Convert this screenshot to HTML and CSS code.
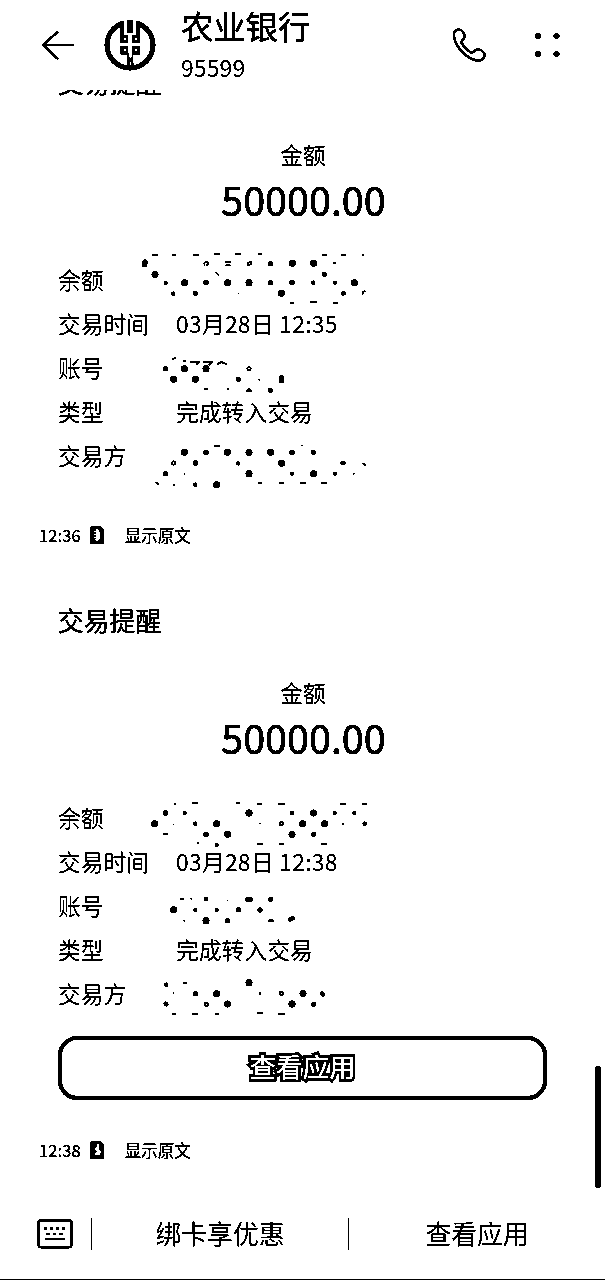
FILE: index.html
```html
<!DOCTYPE html>
<html lang="zh-CN">
<head>
<meta charset="utf-8">
<title>农业银行</title>
<link rel="stylesheet" href="styles.css">
</head>
<body>
<svg class="defs" width="0" height="0" aria-hidden="true">
  <filter id="mono" x="0" y="0" width="100%" height="100%" color-interpolation-filters="sRGB">
    <feColorMatrix type="saturate" values="0"/>
    <feComponentTransfer>
      <feFuncR type="discrete" tableValues="0 0 0 1 1"/>
      <feFuncG type="discrete" tableValues="0 0 0 1 1"/>
      <feFuncB type="discrete" tableValues="0 0 0 1 1"/>
    </feComponentTransfer>
  </filter>
  <symbol id="sim" viewBox="0 0 14 18">
    <path d="M2 0h8l4 3.500v14.500H0V2z"/>
  </symbol>
</svg>
<div class="screen">
  <header class="header">
    <svg class="back" viewBox="0 0 34 30"><path d="M33 15H2M17 1.500L2 15l15 14"/></svg>
    <svg class="logo" viewBox="0 0 52 52">
      <circle class="ring" cx="26" cy="26" r="23"/>
      <path class="gap" d="M16 0h20v8H16z"/>
      <path d="M16.500 2h3.500v14h4v8h-7.500zM36 2h-3.500v14h-4v8H36zM23.500 1h5v13h-5zM16.500 27H24v8.500h-7.500zM28.500 27H36v8.500h-7.500zM22.500 34h2.500v3l1.500 2 1.500-2v-3h2l-1.500 5 1.500 8h-2l-1.500-5-1.500 5h-2.500l1-7z"/>
      <path class="gap" d="M19.500 18.500h2.500v3h-2.500zM30.500 18.500h2.500v3h-2.500zM19.500 29.500h2.500v3h-2.500zM30.500 29.500h2.500v3h-2.500z"/>
    </svg>
    <div class="contact">
      <div class="name">农业银行</div>
      <div class="number">95599</div>
    </div>
    <svg class="phone" viewBox="0 0 34 35"><path d="M7 1.500C3 1 1.500 5 2 8.500C3.500 19 15 31 25 32.500C30 33.500 33 30 32.500 26.500C31.500 23 28 21 24.500 21.500C22 22 22 25 19 24.500C16 23 10.500 17 9.300 14.500C9 12 13 11 12.800 8.500C12 5 10 2 7 1.500Z"/></svg>
    <svg class="more" viewBox="0 0 26 26"><circle cx="4" cy="4" r="2.800"/><circle cx="22.500" cy="4" r="2.800"/><circle cx="4" cy="22" r="2.800"/><circle cx="22.500" cy="22" r="2.800"/></svg>
  </header>

  <main class="thread">
    <section class="card first">
      <h2 class="title">交易提醒</h2>
      <div class="label">金额</div>
      <div class="amount">50000.00</div>
      <dl class="rows">
        <div class="row"><dt>余额</dt><dd><svg class="mask" viewBox="30 57 690 132">
          <path class="d4" d="M75 103h0M164 128h0M293 128h0M357 128h0M454 160h0M487 70h0M551 70h0M673 128h0"/>
          <path class="d3" d="M45 66l-1 8M196 160h0M422 71h0M422 128h0M486 128h0M583 103h0M228 128h0"/>
          <path class="d2" d="M107 129h0M130 161h0M550 128h0M615 128h0M638 160l4 0"/>
          <path class="d1" d="M325 160h0M612 69h4M258 97l8 8M698 155l6-1M698 155v8"/>
          <path class="flat" d="M67 44h17M126 46h12M188 44h18M251 43h20M316 43h18M384 43h12M576 44h14M634 44h14M696 46h6M481 188h11M540 187h20M609 188h14"/>
          <path class="ring" d="M224 75q-4-9 8-9M230 76l6-7M288 66h12M288 76h12M353 74q0-9 10-8M355 75l8-3"/>
        </svg></dd></div>
        <div class="row"><dt>交易时间</dt><dd class="time">03月28日 12:35</dd></div>
        <div class="row"><dt>账号</dt><dd><svg class="mask" viewBox="300 21 690 132">
          <path class="d4" d="M433 86h0M498 86h0M401 118h0M466 118h0"/>
          <path class="d3" d="M377 86h0M595 118h0M724 114v8M691 151h0"/>
          <path class="d2" d="M627 151h0"/>
          <path class="d1" d="M398 57l8-3M431 62l5 2M564 147h0M658 119h0"/>
          <path class="flat" d="M450 66h30M477 67l-8 8M489 66h29M514 67l-7 8M531 74q14-15 29 0M493 147h10M619 153h16"/>
          <circle class="ring" cx="627" cy="86" r="5"/>
        </svg></dd></div>
        <div class="row"><dt>类型</dt><dd>完成转入交易</dd></div>
        <div class="row"><dt>交易方</dt><dd><svg class="mask" viewBox="300 285 690 132">
          <path class="d4" d="M433 337h0M562 337h0M627 337h0M692 337h0M725 370h0M627 401h0M821 401h0M530 434h0"/>
          <path class="d3" d="M466 369h0M820 337h0M756 337h0M498 338h0M377 401h0"/>
          <path class="d2" d="M466 434h0M885 401h0M756 401h0M595 370h0"/>
          <path class="d1" d="M433 402h0M349 427l5 6M402 435h0M941 401h0M970 370l6 6M786 316h0"/>
          <path class="flat" d="M522 318h17M655 430h10M718 430h13M779 429h18M842 429h20"/>
          <circle class="ring" cx="401" cy="369" r="5"/><circle class="ring" cx="909" cy="369" r="5"/>
        </svg></dd></div>
      </dl>
    </section>
    <div class="meta"><span class="clock">12:36</span><svg class="sim" viewBox="0 0 14 18"><use href="#sim"/><path class="hole" d="M6 3h2l2 4v6l-3 3-2-2 1-2H4v-1.500h2V9H4V7.500h2V6H4V4.500h2z"/></svg><span class="origin">显示原文</span></div>

    <section class="card">
      <h2 class="title">交易提醒</h2>
      <div class="label">金额</div>
      <div class="amount">50000.00</div>
      <dl class="rows">
        <div class="row"><dt>余额</dt><dd><svg class="mask" viewBox="30 21 690 132">
          <path class="d4" d="M74 101h0M357 69h0M551 69h0M293 133h0M518 101h0M584 101h0M486 133h0M260 101h0"/>
          <path class="d3" d="M107 69h0M228 133h0M551 133h0"/>
          <path class="d2" d="M196 101h0M486 69h0M614 69h0M704 101h0M164 69h0M260 165h0M673 69h0"/>
          <path class="d1" d="M130 103h0M204 159h0M390 101h0M639 102h0"/>
          <path class="flat" d="M132 43h7M187 40h17M318 40h11M381 43h15M445 43h20M631 41h17M697 41h14M100 132h14M381 162h18M446 162h16M574 161h17"/>
          <circle class="ring" cx="454" cy="101" r="5"/>
        </svg></dd></div>
        <div class="row"><dt>交易时间</dt><dd class="time">03月28日 12:38</dd></div>
        <div class="row"><dt>账号</dt><dd><svg class="mask" viewBox="30 0 690 132">
          <path class="d4" d="M131 74h0M228 107h0"/>
          <path class="d3" d="M325 74h0M293 107h0M422 43h0M354 44h6M390 75h0"/>
          <path class="d2" d="M228 42h0M196 75h0M260 75h0M480 104l8-4"/>
          <path class="d1" d="M184 41h0M292 46h0M163 107h0"/>
          <path class="flat" d="M150 41h12M413 108h18M416 104h12"/>
        </svg></dd></div>
        <div class="row"><dt>类型</dt><dd>完成转入交易</dd></div>
        <div class="row"><dt>交易方</dt><dd><svg class="mask" viewBox="30 264 690 132">
          <path class="d4" d="M357 293h0M293 357h0M486 357h0M260 326h0M519 325h0"/>
          <path class="d3" d="M196 326h0M551 358h0"/>
          <path class="d2" d="M107 356l2 2M576 325l3 4M109 299h0"/>
          <path class="d1" d="M130 324h0M390 323v4M260 388h4"/>
          <path class="flat" d="M159 294h11M126 387h12M187 387h17M255 387h12M381 384h18M445 387h19"/>
          <circle class="ring" cx="229" cy="358" r="5"/><circle class="ring" cx="454" cy="325" r="5"/>
        </svg></dd></div>
      </dl>
      <button class="action">查看应用</button>
    </section>
    <div class="meta last"><span class="clock">12:38</span><svg class="sim" viewBox="0 0 14 18"><use href="#sim"/><path class="hole" d="M7 3h2v5l2 3-1 3H5v-2l2-2-3-2 3-2z"/></svg><span class="origin">显示原文</span></div>
  </main>

  <footer class="menu">
    <svg class="keyboard" viewBox="0 0 36 30"><rect x="1.200" y="1.200" width="33.600" height="27" rx="3"/><path d="M7 9.500h3M13 9.500h3M19 9.500h3M25 9.500h3M9.500 15h3M16 15h3M22.500 15h3M8 20h20"/></svg>
    <div class="item">绑卡享优惠</div>
    <div class="item">查看应用</div>
  </footer>
  <div class="scrollbar"></div>
</div>
</body>
</html>
```
FILE: styles.css
```css
* { box-sizing: border-box; }
body {
  margin: 0;
  background: #fff;
  color: #000;
  font-family: "Noto Sans CJK SC", "Noto Sans", sans-serif;
}
.defs { position: absolute; }
.screen {
  position: relative;
  display: flex;
  flex-direction: column;
  width: 605px;
  height: 1280px;
  overflow: hidden;
  background: #fff;
  border-bottom: 1px solid #000;
  filter: url(#mono);
}
svg { display: block; flex: none; }

.header {
  display: flex;
  align-items: center;
  height: 90px;
  padding-left: 41px;
  flex: none;
}
.back { width: 34px; height: 30px; fill: none; stroke: #000; stroke-width: 2.500; }
.logo { width: 52px; height: 52px; margin-left: 29px; }
.logo .ring { fill: none; stroke: #000; stroke-width: 5; }
.gap { fill: #fff; }
.contact { width: 271px; margin-left: 25px; }
.name { font-size: 32.300px; line-height: 38px; -webkit-text-stroke: .4px #000; }
.number { font-size: 23px; line-height: 34px; margin: 6px 0 0; letter-spacing: .1px; }
.phone { width: 34px; height: 35px; fill: none; stroke: #000; stroke-width: 2.500; }
.more { width: 26px; height: 26px; margin-left: 48px; }
.more circle { r: 3px; }

.thread { height: 1100px; flex: none; overflow: hidden; }
.card { padding: 0 58px; }
.card.first { margin-top: -26px; }
.title {
  margin: 0;
  height: 38px;
  font-size: 25.800px;
  line-height: 36px;
  font-weight: 400;
  -webkit-text-stroke: .3px #000;
}
.label { margin-top: 38px; height: 32px; padding-left: 1px; font-size: 22.700px; line-height: 30px; text-align: center; }
.amount {
  height: 60px;
  padding-left: 2px;
  font-size: 39.500px;
  line-height: 53px;
  text-align: center;
  -webkit-text-stroke: .5px #000;
}
.rows { margin: 27px 0 0; }
.row { display: flex; height: 44px; font-size: 22.800px; line-height: 42px; }
.row dt { width: 118px; flex: none; }
.row dd { margin: 0; white-space: nowrap; }
.row .time { letter-spacing: .28px; }

.mask {
  width: 230px;
  height: 44px;
  margin-left: -36px;
  overflow: visible;
  fill: none;
  stroke: #000;
  stroke-linecap: round;
}
.d4 { stroke-width: 21; }
.d3 { stroke-width: 16; }
.d2 { stroke-width: 13; }
.d1 { stroke-width: 5; }
.flat { stroke-width: 6; stroke-linecap: butt; }
.mask .ring { stroke-width: 5; }

.meta {
  display: flex;
  align-items: center;
  height: 24px;
  margin: 44px 0 55px;
  padding-left: 39px;
  font-size: 16.500px;
  line-height: 24px;
}
.meta.last { margin-top: 38px; }
.clock { letter-spacing: .1px; -webkit-text-stroke: .2px #000; }
.sim { width: 14px; height: 18px; margin-left: 9px; }
.hole { fill: #fff; }
.origin { margin-left: 21px; -webkit-text-stroke: .2px #000; }

.action {
  display: block;
  width: 489px;
  height: 64px;
  margin: 19px 0 0;
  padding: 0 0 4px;
  border: 4px solid #000;
  border-radius: 19px;
  background: #fff;
  color: #fff;
  font: 500 26.500px/50px "Noto Sans CJK SC", sans-serif;
  -webkit-text-stroke: 5px #000;
  paint-order: stroke fill;
}

.menu {
  display: flex;
  align-items: center;
  height: 90px;
  padding: 0 0 2px 37px;
  flex: none;
}
.keyboard { width: 36px; height: 30px; margin-right: 18px; fill: none; stroke: #000; stroke-width: 2.600; }
.item {
  width: 257px;
  height: 32px;
  border-left: 1px solid #000;
  font-size: 25.800px;
  line-height: 29px;
  text-align: center;
  flex: none;
}
.scrollbar {
  position: absolute;
  right: 4px;
  top: 1066px;
  width: 6px;
  height: 122px;
  border-radius: 3px;
  background: #000;
}
```
